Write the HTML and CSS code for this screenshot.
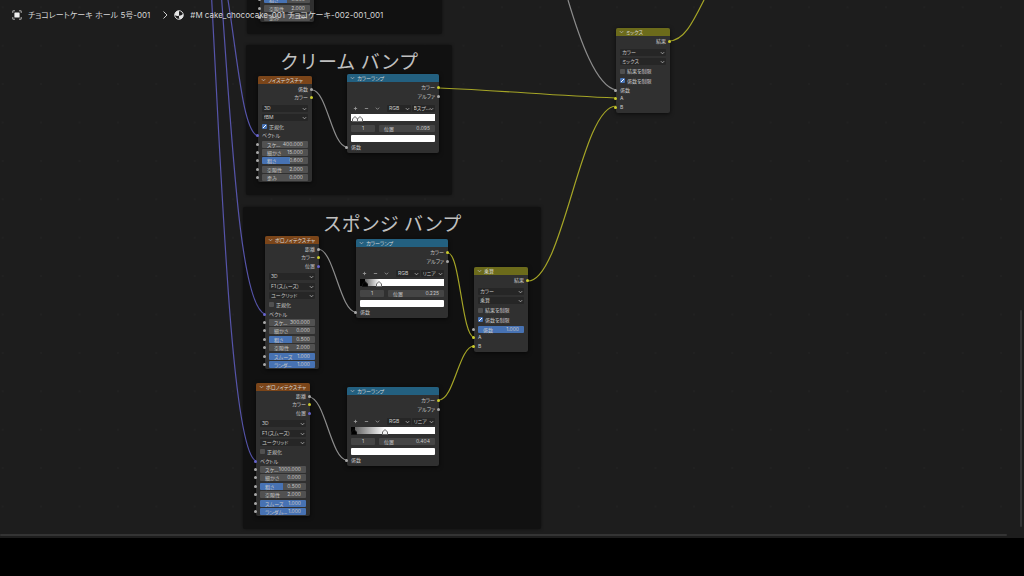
FILE: index.html
```html
<!DOCTYPE html>
<html lang="ja">
<head>
<meta charset="utf-8">
<meta name="viewport" content="width=device-width, initial-scale=1">
<title>チョコレートケーキ ホール 5号-001</title>
<link rel="stylesheet" href="styles.css">
</head>
<body>
<main class="editor">
  <svg class="grid" aria-hidden="true">
    <defs><pattern id="dots" x="1.7" y="6.3" width="38.4" height="38.4" patternUnits="userSpaceOnUse"><circle cx="1" cy="1" r="0.8" fill="#262626"/></pattern></defs>
    <rect width="100%" height="100%" fill="url(#dots)"/>
  </svg>

  <section class="frame frame-top"></section>
  <section class="frame frame-cream"><h2>クリーム バンプ</h2></section>
  <section class="frame frame-sponge"><h2>スポンジ バンプ</h2></section>

  <svg class="wires" aria-hidden="true">
    <g class="wire vector">
      <path d="M228 0C238 62 243 132 258 136"/>
      <path d="M221.7 0C232 140 240 306 265 314"/>
      <path d="M211.7 0C222 190 232 452 256 461"/>
    </g>
    <g class="wire value">
      <path d="M312 90C327 90 332 147 347 147"/>
      <path d="M318 249C334 249 340 312 356 312"/>
      <path d="M309 397C325 397 331 460 347 460"/>
      <path d="M568 0C580 40 596 86 616 90"/>
    </g>
    <g class="wire color">
      <path d="M439 88C510 91 545 95 616 98"/>
      <path d="M448 253C460 253 462 337 474 337"/>
      <path d="M439 400C454 400 459 346 474 346"/>
      <path d="M528 281C563 281 581 106 616 106"/>
      <path d="M669 41C684 41 693 22 704 0"/>
    </g>
  </svg>

  <article class="node texture n-top">
    <div class="body">
      <label class="slider in"><span>粗さ</span><input value="0.500" style="--fill:50%"></label>
      <label class="slider in"><span>空隙性</span><input value="2.000"></label>
      <label class="slider in"><span>歪み</span><input value="0.000"></label>
    </div>
  </article>

  <article class="node texture n-noise">
    <header><svg viewBox="0 0 6 4"><path d="M1 1l2 2 2-2"/></svg>ノイズテクスチャ</header>
    <div class="body">
      <div class="out">係数</div>
      <div class="out yellow">カラー</div>
      <div class="menu first"><select aria-label="次元"><option>3D</option></select><svg viewBox="0 0 6 4"><path d="M1 1l2 2 2-2"/></svg></div>
      <div class="menu"><select aria-label="タイプ"><option>fBM</option></select><svg viewBox="0 0 6 4"><path d="M1 1l2 2 2-2"/></svg></div>
      <label class="check"><input type="checkbox" checked>正規化</label>
      <div class="in purple">ベクトル</div>
      <label class="slider in"><span>スケ...</span><input value="400.000"></label>
      <label class="slider in"><span>細かさ</span><input value="15.000"></label>
      <label class="slider in"><span>粗さ</span><input value="0.600" style="--fill:60%"></label>
      <label class="slider in"><span>空隙性</span><input value="2.000"></label>
      <label class="slider in"><span>歪み</span><input value="0.000"></label>
    </div>
  </article>

  <article class="node ramp n-ramp1">
    <header><svg viewBox="0 0 6 4"><path d="M1 1l2 2 2-2"/></svg>カラーランプ</header>
    <div class="body">
      <div class="out yellow">カラー</div>
      <div class="out">アルファ</div>
      <div class="tools">
        <button aria-label="追加"><svg viewBox="0 0 6 6"><path d="M3 1v4M1 3h4"/></svg></button>
        <button aria-label="削除"><svg viewBox="0 0 6 6"><path d="M1 3h4"/></svg></button>
        <button aria-label="ツール"><svg viewBox="0 0 6 6"><path d="M1 2l2 2 2-2"/></svg></button>
        <div class="menu"><select aria-label="カラーモード"><option>RGB</option></select><svg viewBox="0 0 6 4"><path d="M1 1l2 2 2-2"/></svg></div>
        <div class="menu"><select aria-label="補間"><option>Bスプ...</option></select><svg viewBox="0 0 6 4"><path d="M1 1l2 2 2-2"/></svg></div>
      </div>
      <div class="band white"><svg class="stop" viewBox="0 0 6 6" style="left:5%"><path d="M3 .5L5.500 3v2.500h-5V3z"/></svg><svg class="stop" viewBox="0 0 6 6" style="left:11%"><path d="M3 .5L5.500 3v2.500h-5V3z"/></svg></div>
      <div class="pos"><input class="index" aria-label="番号" value="1"><label class="slider"><span>位置</span><input value="0.095"></label></div>
      <button class="swatch" aria-label="色"></button>
      <div class="in">係数</div>
    </div>
  </article>

  <article class="node texture n-vor1">
    <header><svg viewBox="0 0 6 4"><path d="M1 1l2 2 2-2"/></svg>ボロノイテクスチャ</header>
    <div class="body">
      <div class="out">距離</div>
      <div class="out yellow">カラー</div>
      <div class="out purple">位置</div>
      <div class="menu first"><select aria-label="次元"><option>3D</option></select><svg viewBox="0 0 6 4"><path d="M1 1l2 2 2-2"/></svg></div>
      <div class="menu"><select aria-label="特徴"><option>F1（スムーズ）</option></select><svg viewBox="0 0 6 4"><path d="M1 1l2 2 2-2"/></svg></div>
      <div class="menu"><select aria-label="距離計量"><option>ユークリッド</option></select><svg viewBox="0 0 6 4"><path d="M1 1l2 2 2-2"/></svg></div>
      <label class="check"><input type="checkbox">正規化</label>
      <div class="in purple">ベクトル</div>
      <label class="slider in"><span>スケ...</span><input value="300.000"></label>
      <label class="slider in"><span>細かさ</span><input value="0.000"></label>
      <label class="slider in"><span>粗さ</span><input value="0.500" style="--fill:50%"></label>
      <label class="slider in"><span>空隙性</span><input value="2.000"></label>
      <label class="slider in"><span>スムーズ</span><input value="1.000" style="--fill:100%"></label>
      <label class="slider in"><span>ランダ...</span><input value="1.000" style="--fill:100%"></label>
    </div>
  </article>

  <article class="node ramp n-ramp2">
    <header><svg viewBox="0 0 6 4"><path d="M1 1l2 2 2-2"/></svg>カラーランプ</header>
    <div class="body">
      <div class="out yellow">カラー</div>
      <div class="out">アルファ</div>
      <div class="tools">
        <button aria-label="追加"><svg viewBox="0 0 6 6"><path d="M3 1v4M1 3h4"/></svg></button>
        <button aria-label="削除"><svg viewBox="0 0 6 6"><path d="M1 3h4"/></svg></button>
        <button aria-label="ツール"><svg viewBox="0 0 6 6"><path d="M1 2l2 2 2-2"/></svg></button>
        <div class="menu"><select aria-label="カラーモード"><option>RGB</option></select><svg viewBox="0 0 6 4"><path d="M1 1l2 2 2-2"/></svg></div>
        <div class="menu"><select aria-label="補間"><option>リニア</option></select><svg viewBox="0 0 6 4"><path d="M1 1l2 2 2-2"/></svg></div>
      </div>
      <div class="band" style="--from:6%;--to:23%"><svg class="stop black" viewBox="0 0 6 6" style="left:6%"><path d="M3 .5L5.500 3v2.500h-5V3z"/></svg><svg class="stop" viewBox="0 0 6 6" style="left:23%"><path d="M3 .5L5.500 3v2.500h-5V3z"/></svg></div>
      <div class="pos"><input class="index" aria-label="番号" value="1"><label class="slider"><span>位置</span><input value="0.225"></label></div>
      <button class="swatch" aria-label="色"></button>
      <div class="in">係数</div>
    </div>
  </article>

  <article class="node texture n-vor2">
    <header><svg viewBox="0 0 6 4"><path d="M1 1l2 2 2-2"/></svg>ボロノイテクスチャ</header>
    <div class="body">
      <div class="out">距離</div>
      <div class="out yellow">カラー</div>
      <div class="out purple">位置</div>
      <div class="menu first"><select aria-label="次元"><option>3D</option></select><svg viewBox="0 0 6 4"><path d="M1 1l2 2 2-2"/></svg></div>
      <div class="menu"><select aria-label="特徴"><option>F1（スムーズ）</option></select><svg viewBox="0 0 6 4"><path d="M1 1l2 2 2-2"/></svg></div>
      <div class="menu"><select aria-label="距離計量"><option>ユークリッド</option></select><svg viewBox="0 0 6 4"><path d="M1 1l2 2 2-2"/></svg></div>
      <label class="check"><input type="checkbox">正規化</label>
      <div class="in purple">ベクトル</div>
      <label class="slider in"><span>スケ...</span><input value="1000.000"></label>
      <label class="slider in"><span>細かさ</span><input value="0.000"></label>
      <label class="slider in"><span>粗さ</span><input value="0.500" style="--fill:50%"></label>
      <label class="slider in"><span>空隙性</span><input value="2.000"></label>
      <label class="slider in"><span>スムーズ</span><input value="1.000" style="--fill:100%"></label>
      <label class="slider in"><span>ランダム...</span><input value="1.000" style="--fill:100%"></label>
    </div>
  </article>

  <article class="node ramp n-ramp3">
    <header><svg viewBox="0 0 6 4"><path d="M1 1l2 2 2-2"/></svg>カラーランプ</header>
    <div class="body">
      <div class="out yellow">カラー</div>
      <div class="out">アルファ</div>
      <div class="tools">
        <button aria-label="追加"><svg viewBox="0 0 6 6"><path d="M3 1v4M1 3h4"/></svg></button>
        <button aria-label="削除"><svg viewBox="0 0 6 6"><path d="M1 3h4"/></svg></button>
        <button aria-label="ツール"><svg viewBox="0 0 6 6"><path d="M1 2l2 2 2-2"/></svg></button>
        <div class="menu"><select aria-label="カラーモード"><option>RGB</option></select><svg viewBox="0 0 6 4"><path d="M1 1l2 2 2-2"/></svg></div>
        <div class="menu"><select aria-label="補間"><option>リニア</option></select><svg viewBox="0 0 6 4"><path d="M1 1l2 2 2-2"/></svg></div>
      </div>
      <div class="band" style="--from:5%;--to:40%"><svg class="stop black" viewBox="0 0 6 6" style="left:4%"><path d="M3 .5L5.500 3v2.500h-5V3z"/></svg><svg class="stop" viewBox="0 0 6 6" style="left:40%"><path d="M3 .5L5.500 3v2.500h-5V3z"/></svg></div>
      <div class="pos"><input class="index" aria-label="番号" value="1"><label class="slider"><span>位置</span><input value="0.404"></label></div>
      <button class="swatch" aria-label="色"></button>
      <div class="in">係数</div>
    </div>
  </article>

  <article class="node mix n-mult">
    <header><svg viewBox="0 0 6 4"><path d="M1 1l2 2 2-2"/></svg>乗算</header>
    <div class="body">
      <div class="out yellow">結果</div>
      <div class="menu first"><select aria-label="データタイプ"><option>カラー</option></select><svg viewBox="0 0 6 4"><path d="M1 1l2 2 2-2"/></svg></div>
      <div class="menu"><select aria-label="ブレンドモード"><option>乗算</option></select><svg viewBox="0 0 6 4"><path d="M1 1l2 2 2-2"/></svg></div>
      <label class="check"><input type="checkbox">結果を制限</label>
      <label class="check"><input type="checkbox" checked>係数を制限</label>
      <label class="slider in"><span>係数</span><input value="1.000" style="--fill:100%"></label>
      <div class="in yellow">A</div>
      <div class="in yellow">B</div>
    </div>
  </article>

  <article class="node mix n-mix">
    <header><svg viewBox="0 0 6 4"><path d="M1 1l2 2 2-2"/></svg>ミックス</header>
    <div class="body">
      <div class="out yellow">結果</div>
      <div class="menu first"><select aria-label="データタイプ"><option>カラー</option></select><svg viewBox="0 0 6 4"><path d="M1 1l2 2 2-2"/></svg></div>
      <div class="menu"><select aria-label="ブレンドモード"><option>ミックス</option></select><svg viewBox="0 0 6 4"><path d="M1 1l2 2 2-2"/></svg></div>
      <label class="check"><input type="checkbox">結果を制限</label>
      <label class="check"><input type="checkbox" checked>係数を制限</label>
      <div class="in">係数</div>
      <div class="in yellow">A</div>
      <div class="in yellow">B</div>
    </div>
  </article>

  <nav class="path" aria-label="パス">
    <svg viewBox="0 0 10 10"><path d="M3 .8H.8V3M7 .8h2.2V3M3 9.2H.8V7M7 9.2h2.2V7" fill="none" stroke="#bbb" stroke-width=".9"/><rect x="2.4" y="2.4" width="5.2" height="5.2" rx=".6" fill="#eee"/></svg>
    <span>チョコレートケーキ ホール 5号-001</span>
    <svg class="sep" viewBox="0 0 10 10"><path d="M3.5 1.5L7 5 3.5 8.5" fill="none" stroke="#ccc"/></svg>
    <svg viewBox="0 0 10 10"><circle cx="5" cy="5" r="4.3" fill="#1d1d1d" stroke="#e6e6e6" stroke-width=".9"/><path d="M5 .7A4.3 4.3 0 0 0 .7 5Q2.5 6.2 5 5.8zM5 5.8Q7.5 5.5 9.1 4 9.8 8.8 5.6 9.3 4.7 7.500 5 5.800z" fill="#e6e6e6"/></svg>
    <span>#M cake_chococake-001 チョコケーキ-002-001_001</span>
  </nav>
  <div class="bar vertical"></div>
  <div class="bar horizontal"></div>
</main>
</body>
</html>
```

FILE: styles.css
```css
* { box-sizing: border-box; }
body {
  margin: 0;
  min-height: 100vh;
  background: #000;
  color: #c8c8c8;
  font-family: Inter, "Noto Sans CJK JP", sans-serif;
  font-size: 5px;
  line-height: 8px;
  font-feature-settings: "palt";
}
input, select, button {
  margin: 0;
  padding: 0;
  border: 0;
  background: none;
  color: inherit;
  font: inherit;
  font-feature-settings: inherit;
  appearance: none;
}
.editor {
  position: relative;
  height: calc(100vh - 38px);
  overflow: hidden;
  background: #1d1d1d;
}
.grid, .wires {
  position: absolute;
  inset: 0;
  width: 100%;
  height: 100%;
}

/* breadcrumb */
.path {
  position: relative;
  display: flex;
  align-items: center;
  gap: 6px;
  padding: 9px 12px;
  color: #d6d6d6;
  font-size: 8px;
  line-height: 12px;
  white-space: nowrap;
}
.path svg { width: 10px; height: 10px; flex: none; }
.path .sep { margin: 0 -2px 0 4px; }

/* frames */
.frame {
  position: absolute;
  border-radius: 2px;
  background: #111;
  box-shadow: 0 0 3px #0008;
}
.frame h2 {
  margin: 0;
  color: #c0c0c0;
  font-size: 19px;
  font-weight: 400;
  line-height: 36px;
  text-align: center;
  font-feature-settings: normal;
}
.frame-top { left: 247px; top: -10px; width: 195px; height: 44px; }
.frame-cream { left: 246px; top: 45px; width: 206px; height: 150px; }
.frame-sponge { left: 243px; top: 207px; width: 298px; height: 322px; }

/* links between sockets */
.wire { fill: none; stroke-width: 1.2; }
.vector { stroke: #5654aa; }
.value { stroke: #8c8c8c; }
.color { stroke: #a5a526; }

/* nodes */
.node {
  position: absolute;
  display: flex;
  flex-direction: column;
  width: 54px;
  border-radius: 2px;
  background: #303030;
  box-shadow: 0 1px 4px #000a;
  white-space: nowrap;
}
.node header {
  display: flex;
  align-items: center;
  gap: 2px;
  height: 8px;
  padding-left: 3px;
  border-radius: 2px 2px 0 0;
  color: #d8d8d8;
  font-family: "Noto Sans CJK JP", sans-serif;
}
.node svg { width: 5px; height: 4px; flex: none; fill: none; stroke: #b4b4b4; }
.texture header { background: #7b4519; }
.ramp header { background: #236080; }
.mix header { background: #6c6b1b; }
.body {
  flex: 1;
  display: flex;
  flex-direction: column;
  justify-content: space-between;
  padding: 1px 4px;
}
.ramp .body, .mix .body { padding-bottom: 2px; }
.n-top { left: 260px; top: -6px; height: 28px; }
.n-noise { left: 258px; top: 76px; height: 106px; }
.n-ramp1 { left: 347px; top: 74px; height: 79px; }
.n-vor1 { left: 265px; top: 236px; height: 133px; }
.n-ramp2 { left: 356px; top: 239px; height: 79px; }
.n-vor2 { left: 256px; top: 383px; height: 133px; }
.n-ramp3 { left: 347px; top: 387px; height: 79px; }
.n-mult { left: 474px; top: 267px; height: 85px; }
.n-mix { left: 616px; top: 28px; height: 85px; }
.ramp { width: 92px; }

.in, .out { position: relative; height: 8px; }
.out { text-align: right; }
.in::before, .out::after {
  content: "";
  position: absolute;
  top: 3px;
  width: 3px;
  height: 3px;
  border-radius: 50%;
  background: #a8a8a8;
}
.in::before { left: -6px; }
.out::after { right: -5px; }
.yellow::before, .yellow::after { background: #cbcb2c; }
.purple::before, .purple::after { background: #6664cc; }

.menu { position: relative; height: 9px; padding: 1px 0; }
.first { margin-top: 2px; }
.menu select {
  display: block;
  width: 100%;
  height: 7px;
  padding: 0 2px;
  border-radius: 1px;
  background: #262626;
  line-height: 7px;
}
.menu svg { position: absolute; right: 1px; top: 3px; pointer-events: none; }

.check { display: flex; align-items: center; gap: 2px; height: 9px; }
.check input { width: 5px; height: 5px; border-radius: 1px; background: #505050; }
.check input:checked {
  background: #4772b3 linear-gradient(135deg, transparent 40%, #fff 40% 60%, transparent 60%) center / 3px 3px no-repeat;
}

.slider { position: relative; display: grid; align-items: end; height: 8px; line-height: 7px; }
.slider span, .slider input { grid-area: 1 / 1; }
.slider span {
  z-index: 1;
  height: 7px;
  padding-left: 5px;
  font-family: "Noto Sans CJK JP", sans-serif;
}
.slider input {
  width: 100%;
  height: 7px;
  padding-right: 5px;
  border-radius: 1px;
  background: linear-gradient(90deg, #4772b3 var(--fill, 0%), #515151 var(--fill, 0%));
  line-height: 7px;
  text-align: right;
}

/* color ramp */
.tools { display: flex; align-items: center; height: 9px; margin-top: 3px; padding-left: 2px; }
.tools button { display: flex; width: 11px; height: 6px; }
.tools button svg { width: 5px; height: 5px; stroke: #9a9a9a; }
.tools .menu { flex: 1; margin-left: 1px; }
.band {
  position: relative;
  height: 7px;
  background: linear-gradient(90deg, #000 var(--from), #666 var(--from), #fff var(--to));
}
.band.white { background: #fff; }
.node .stop {
  position: absolute;
  bottom: -1px;
  width: 6px;
  height: 6px;
  margin-left: -3px;
  fill: #f4f4f4;
  stroke: #666;
}
.node .stop.black { fill: #000; stroke: #111; }
.pos { display: flex; gap: 4px; height: 7px; margin-top: 3px; }
.pos .slider { flex: 1; height: 7px; }
.index { width: 24px; height: 7px; border-radius: 1px; background: #454545; line-height: 7px; text-align: center; }
.pos .slider input { background: #454545; }
.swatch { height: 7px; margin-top: 2px; border-radius: 1px; background: #fff; }

/* scroll bars */
.bar { position: absolute; border-radius: 2px; background: #343434; }
.vertical { right: 2px; top: 310px; bottom: 11px; width: 2px; }
.horizontal { left: 0; right: 17px; bottom: 2px; height: 2px; }
```
